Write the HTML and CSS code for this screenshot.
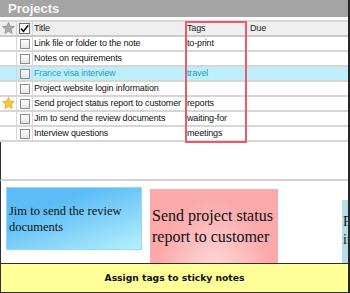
FILE: index.html
```html
<html lang="en">
<head>
    <meta charset="UTF-8">
    <meta name="viewport" content="width=device-width, initial-scale=1.0">
    <title>Projects</title>
    <link rel="stylesheet" href="styles.css">
</head>
<body>
    <div class="app">
        <div class="titlebar">Projects</div>
        <div class="grid">
            <div class="row head">
                <div class="c star">
                    <svg width="13" height="13" viewBox="0 0 12 12"><polygon class="star-grey" points="6,0.4 7.53,3.9 11.4,4.25 8.47,6.8 9.35,10.6 6,8.6 2.65,10.6 3.53,6.8 0.6,4.25 4.47,3.9"/></svg>
                </div>
                <div class="c chk">
                    <span class="box big"><svg width="9" height="9" viewBox="0 0 9 9"><path d="M1 4.6 L3.5 7.2 L8.2 1.2" fill="none" stroke="#111" stroke-width="1.6"/></svg></span>
                </div>
                <div class="c title">Title</div>
                <div class="c tags">Tags</div>
                <div class="c due">Due</div>
            </div>
            <div class="row">
                <div class="c star"></div>
                <div class="c chk"><span class="box"></span></div>
                <div class="c title">Link file or folder to the note</div>
                <div class="c tags">to-print</div>
                <div class="c due"></div>
            </div>
            <div class="row">
                <div class="c star"></div>
                <div class="c chk"><span class="box"></span></div>
                <div class="c title">Notes on requirements</div>
                <div class="c tags"></div>
                <div class="c due"></div>
            </div>
            <div class="row selected">
                <div class="c star"></div>
                <div class="c chk"><span class="box"></span></div>
                <div class="c title">France visa interview</div>
                <div class="c tags">travel</div>
                <div class="c due"></div>
            </div>
            <div class="row">
                <div class="c star"></div>
                <div class="c chk"><span class="box"></span></div>
                <div class="c title">Project website login information</div>
                <div class="c tags"></div>
                <div class="c due"></div>
            </div>
            <div class="row">
                <div class="c star">
                    <svg width="13" height="13" viewBox="0 0 12 12"><polygon class="star-gold" points="6,0.4 7.53,3.9 11.4,4.25 8.47,6.8 9.35,10.6 6,8.6 2.65,10.6 3.53,6.8 0.6,4.25 4.47,3.9"/></svg>
                </div>
                <div class="c chk"><span class="box"></span></div>
                <div class="c title">Send project status report to customer</div>
                <div class="c tags">reports</div>
                <div class="c due"></div>
            </div>
            <div class="row">
                <div class="c star"></div>
                <div class="c chk"><span class="box"></span></div>
                <div class="c title">Jim to send the review documents</div>
                <div class="c tags">waiting-for</div>
                <div class="c due"></div>
            </div>
            <div class="row">
                <div class="c star"></div>
                <div class="c chk"><span class="box"></span></div>
                <div class="c title">Interview questions</div>
                <div class="c tags">meetings</div>
                <div class="c due"></div>
            </div>
            <div class="tagbox"></div>
        </div>
        <div class="blank"></div>
        <div class="notes">
            <div class="note blue">Jim to send the review documents</div>
            <div class="note pink">Send project status report to customer</div>
            <div class="note cyan">France visa interview</div>
        </div>
        <div class="hint">Assign tags to sticky notes</div>
    </div>
</body>
</html>
```
FILE: styles.css
```css
body {
    margin: 0;
    background: #fff;
    font-family: 'Liberation Sans', Arial, sans-serif;
}
.app {
    width: 348px;
    height: 293px;
    border-right: 2px solid #262626;
    overflow: hidden;
}
.titlebar {
    height: 17px;
    line-height: 18px;
    background: #a4a4a4;
    color: #f6f6f6;
    font-weight: bold;
    font-size: 13px;
    padding-left: 8px;
}
.grid { position: relative; padding-top: 3px; }
.row {
    display: flex;
    height: 13px;
    border-bottom: 2px solid #d6d6d6;
    font-size: 9px;
    letter-spacing: -0.15px;
    line-height: 13px;
    color: #111;
    background: #fff;
}
.row.head {
    background: #efefef;
    border-top: 2px solid #dadada;
    border-bottom-color: #c9c9c9;
    color: #222;
}
.row.selected { background: #bdeefa; color: #2a9ccc; }
.c { white-space: nowrap; overflow: hidden; }
.star {
    width: 16px;
    border-right: 1px solid #d6d6d6;
    display: flex;
    align-items: center;
    justify-content: center;
}
.chk {
    width: 15px;
    border-right: 1px solid #d6d6d6;
    display: flex;
    align-items: center;
    justify-content: center;
}
.title { width: 151px; padding-left: 1px; }
.tags { width: 60px; padding-left: 2px; }
.due { flex: 1; padding-left: 3px; }
.star-grey { fill: #ababab; stroke: #8e8e8e; stroke-width: 0.7; }
.star-gold { fill: #ffc83a; stroke: #e19a1c; stroke-width: 0.7; }
.box {
    width: 8px;
    height: 8px;
    border: 1px solid #8d8d8d;
    background: linear-gradient(#ffffff, #e4e4e4);
    display: flex;
    align-items: center;
    justify-content: center;
}
.box.big { width: 9px; height: 9px; border-color: #6e6e6e; background: #fff; }
.tagbox {
    position: absolute;
    left: 185px;
    top: 4px;
    width: 62px;
    height: 122px;
    box-sizing: border-box;
    border: 2px solid #e65c6c;
}
.blank {
    height: 37px;
    border-left: 1px solid #303030;
    border-bottom: 2px solid #d2d2d2;
}
.notes {
    display: flex;
    align-items: flex-start;
    height: 82px;
    overflow: hidden;
    border-left: 1px solid #303030;
    font-family: 'Liberation Serif', 'Times New Roman', serif;
    color: #111;
}
.note { flex-shrink: 0; box-sizing: border-box; }
.note.blue {
    margin: 6px 0 0 5px;
    width: 136px;
    height: 63px;
    border: 1px solid #92d8fb;
    background: linear-gradient(160deg, #5cbdf6 30%, #8fd9fa 70%, #b6f2ff);
    font-size: 12.5px;
    line-height: 16px;
    padding: 15px 2px 0;
}
.note.pink {
    margin: 8px 0 0 8px;
    width: 128px;
    height: 100px;
    background: radial-gradient(ellipse at 50% 100%, #fde6e6 0, #fcc2c3 35%, #fba9ab 65%);
    font-size: 16px;
    line-height: 21px;
    padding: 16px 2px 0;
}
.note.cyan {
    margin: 19px 0 0 64px;
    width: 70px;
    height: 80px;
    background: #b6dce8;
    font-size: 14px;
    line-height: 18px;
    padding: 13px 1px 0;
}
.hint {
    height: 28px;
    line-height: 28px;
    background: #ffff99;
    border: 1px solid #303030;
    border-right: none;
    text-align: center;
    font-family: 'DejaVu Sans', Verdana, sans-serif;
    font-weight: bold;
    font-size: 9.2px;
    color: #111;
}
```
